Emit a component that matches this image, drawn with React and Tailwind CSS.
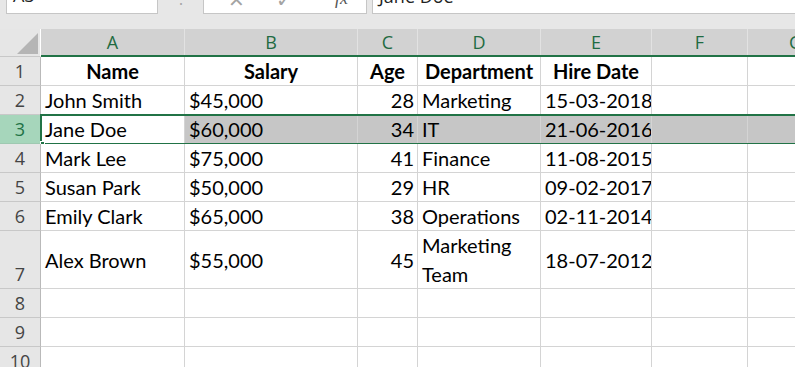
import React from 'react'

const COLS = [
  { key: 'A', w: 'w-[144px]' },
  { key: 'B', w: 'w-[173px]' },
  { key: 'C', w: 'w-[60px]' },
  { key: 'D', w: 'w-[123px]' },
  { key: 'E', w: 'w-[111px]' },
  { key: 'F', w: 'w-[96px]' },
  { key: 'G', w: 'w-[96px]' },
]

const ROWS = [
  { n: 1, cells: ['Name', 'Salary', 'Age', 'Department', 'Hire Date'], head: true },
  { n: 2, cells: ['John Smith', '$45,000', '28', 'Marketing', '15-03-2018'] },
  { n: 3, cells: ['Jane Doe', '$60,000', '34', 'IT', '21-06-2016'], selected: true },
  { n: 4, cells: ['Mark Lee', '$75,000', '41', 'Finance', '11-08-2015'] },
  { n: 5, cells: ['Susan Park', '$50,000', '29', 'HR', '09-02-2017'] },
  { n: 6, cells: ['Emily Clark', '$65,000', '38', 'Operations', '02-11-2014'] },
  { n: 7, cells: ['Alex Brown', '$55,000', '45', 'Marketing Team', '18-07-2012'], tall: true },
  { n: 8, cells: [] },
  { n: 9, cells: [] },
  { n: 10, cells: [] },
]

const uiFont = { fontFamily: '"Open Sans", "Noto Sans", sans-serif' }
const cellFont = { fontFamily: 'Lato, "Liberation Sans", sans-serif' }

function FormulaBar() {
  return (
    <div className="h-[14px] flex items-end overflow-hidden bg-[#e7e7e7]" style={uiFont}>
      <div className="ml-[6px] w-[152px] h-[30px] shrink-0 bg-white border border-[#c6c6c6] text-[18px] text-[#222] leading-[30px] pl-[6px]">
        <span className="relative top-[-5px]">A3</span>
      </div>
      <div className="w-[45px] h-[30px] shrink-0 flex justify-center text-[#a8a8a8] text-[16px] leading-[28px]">⋮</div>
      <div className="w-[164px] h-[30px] shrink-0 bg-white border border-[#c6c6c6] flex items-center text-[#a3a3a3]">
        <span className="ml-[24px] text-[20px] leading-none relative top-[1px]">✕</span>
        <span className="ml-[31px] text-[20px] leading-none relative top-[1px]">✓</span>
        <span className="ml-[42px] text-[18px] italic text-[#555] leading-none relative top-[-1px]" style={{ fontFamily: '"Liberation Serif", serif' }}>fx</span>
      </div>
      <div className="ml-[5px] flex-1 h-[30px] bg-white border border-[#c6c6c6] border-r-0 pl-[6px] text-[18px] text-[#222] leading-[30px]">
        <span className="relative top-[-4px]">Jane Doe</span>
      </div>
    </div>
  )
}

function ColumnHeaders() {
  return (
    <div className="flex h-[28px]" style={uiFont}>
      <div className="w-[41px] shrink-0 h-full bg-[#e6e6e6] border-r border-white border-b border-b-[#c8c8c8] relative">
        <svg className="absolute left-0 top-0" width="41" height="28" viewBox="0 0 41 28">
          <polygon points="38,4 38,25 17,25" fill="#b5b5b5" />
        </svg>
      </div>
      <div className="flex flex-1 bg-[#d2d2d2] border-b-2 border-[#217346]">
        {COLS.map((c) => (
          <div key={c.key} className={`${c.w} shrink-0 h-full border-r border-[#e2e2e2] flex items-center justify-center text-[18px] text-[#1f6b42] leading-none`}>
            {c.key}
          </div>
        ))}
      </div>
    </div>
  )
}

function Cell({ col, idx, row }) {
  const text = row.cells[idx] || ''
  const align = row.head
    ? 'justify-center font-bold'
    : idx === 2
      ? 'justify-end pr-[3px]'
      : 'justify-start pl-[4px]'
  const bg = row.selected && idx > 0 ? 'bg-[#c6c6c6]' : 'bg-white'
  const vert = row.tall ? 'items-center' : 'items-end'
  if (row.tall && idx === 3) {
    return (
      <div className={`${col.w} shrink-0 h-full border-r border-b border-[#d4d4d4] ${bg} flex flex-col justify-center pl-[4px] text-[20px] leading-[28.5px] text-black`}>
        <span>Marketing</span>
        <span>Team</span>
      </div>
    )
  }
  return (
    <div className={`${col.w} shrink-0 h-full border-r border-b border-[#d4d4d4] ${bg} flex ${vert} ${align} text-[20px] leading-[28px] text-black whitespace-nowrap overflow-hidden`}>
      {text}
    </div>
  )
}

function Row({ row }) {
  const h = row.tall ? 'h-[58px]' : 'h-[29px]'
  return (
    <div className={`flex ${h} relative`}>
      <div
        className={`w-[41px] shrink-0 h-full border-r border-b flex items-end justify-center text-[18px] leading-[28px] ${
          row.selected
            ? 'bg-[#a6d6bb] text-[#217346] border-r-[#9fc9b1] border-b-[#9fc9b1]'
            : 'bg-[#e6e6e6] text-[#444] border-[#c8c8c8] border-r-[#b9b9b9]'
        }`}
        style={uiFont}
      >
        {row.n}
      </div>
      <div className="flex flex-1" style={cellFont}>
        {COLS.map((c, i) => (
          <Cell key={c.key} col={c} idx={i} row={row} />
        ))}
      </div>
      {row.selected && (
        <>
          <div className="absolute left-[40px] right-0 top-[-1px] bottom-[-1px] border-2 border-r-0 border-[#217346] pointer-events-none" />
          <div className="absolute left-[40px] bottom-[-2px] w-[5px] h-[5px] bg-[#217346] border border-white" />
        </>
      )}
    </div>
  )
}

export default function App() {
  return (
    <div className="w-[795px] h-[367px] overflow-hidden bg-white">
      <FormulaBar />
      <div className="h-[15px] bg-[#e7e7e7]" />
      <ColumnHeaders />
      {ROWS.map((r) => (
        <Row key={r.n} row={r} />
      ))}
    </div>
  )
}
